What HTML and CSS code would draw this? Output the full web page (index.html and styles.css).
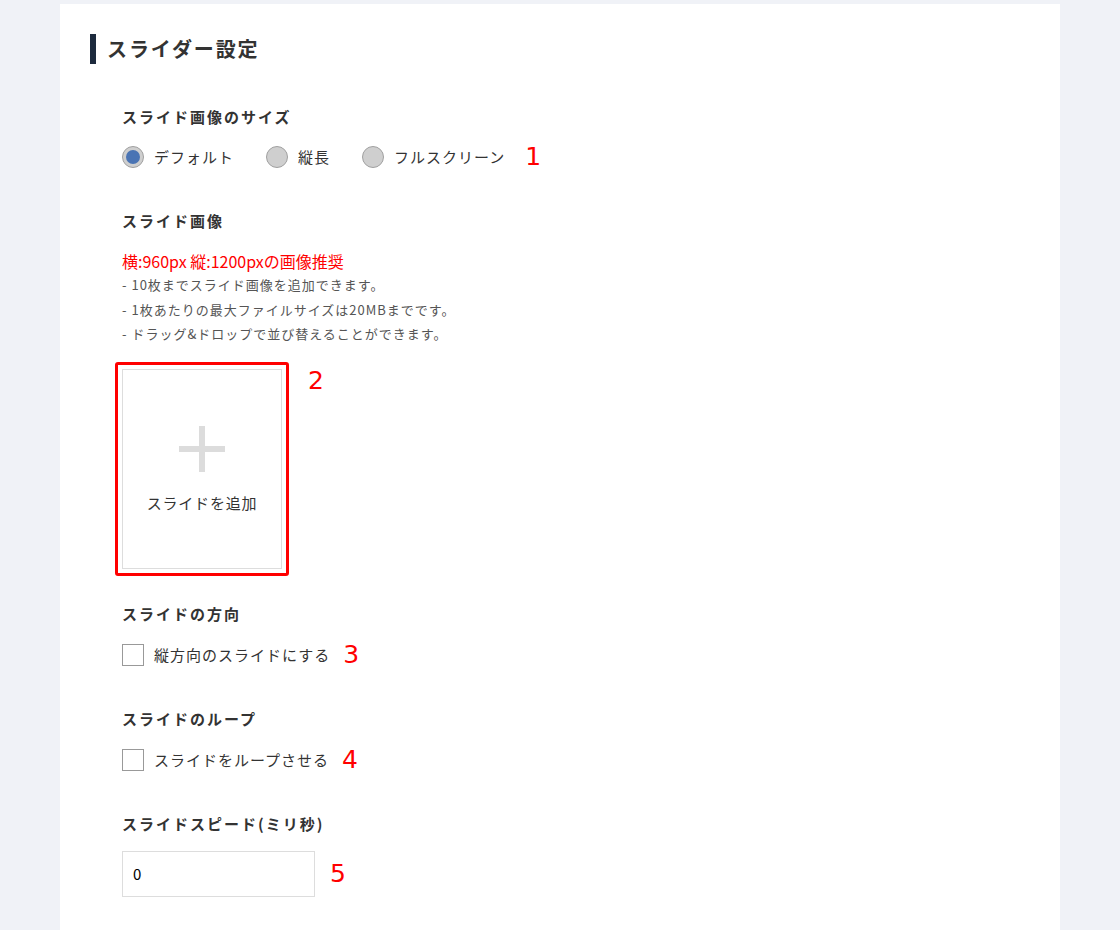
FILE: index.html
```html
<!DOCTYPE html>
<html lang="ja">
<head>
  <meta charset="UTF-8" />
  <meta name="viewport" content="width=device-width, initial-scale=1.0" />
  <title>スライダー設定</title>
  <link rel="stylesheet" href="styles.css">
</head>
<body>

  <div class="panel">
    <h2 class="section-title">スライダー設定</h2>

    <div class="field field-size">
      <div class="field-label">スライド画像のサイズ</div>
      <div class="radio-row">
        <label class="radio"><span class="radio-mark checked"></span>デフォルト</label>
        <label class="radio"><span class="radio-mark"></span>縦長</label>
        <label class="radio"><span class="radio-mark"></span>フルスクリーン</label>
        <span class="note-num">1</span>
      </div>
    </div>

    <div class="field field-images">
      <div class="field-label">スライド画像</div>
      <p class="recommend">横:960px 縦:1200pxの画像推奨</p>
      <ul class="notes">
        <li>- 10枚までスライド画像を追加できます。</li>
        <li>- 1枚あたりの最大ファイルサイズは20MBまでです。</li>
        <li>- ドラッグ&amp;ドロップで並び替えることができます。</li>
      </ul>
      <div class="upload-row">
        <div class="highlight">
          <div class="add-slide">
            <span class="plus"></span>
            <span class="add-text">スライドを追加</span>
          </div>
        </div>
        <span class="note-num num-top">2</span>
      </div>
    </div>

    <div class="field field-direction">
      <div class="field-label">スライドの方向</div>
      <div class="check-row">
        <label class="check"><span class="check-mark"></span>縦方向のスライドにする</label>
        <span class="note-num">3</span>
      </div>
    </div>

    <div class="field">
      <div class="field-label">スライドのループ</div>
      <div class="check-row">
        <label class="check"><span class="check-mark"></span>スライドをループさせる</label>
        <span class="note-num">4</span>
      </div>
    </div>

    <div class="field field-speed">
      <div class="field-label">スライドスピード(ミリ秒)</div>
      <div class="input-row">
        <input type="text" class="text-input" value="0" />
        <span class="note-num">5</span>
      </div>
    </div>
  </div>

</body>
</html>
```

FILE: styles.css
```css
body {
  margin: 0;
  background: #f0f2f7;
  color: #333;
  font-family: "Noto Sans CJK JP", "Noto Sans", sans-serif;
}
.panel {
  width: 1000px;
  margin: 4px 0 0 60px;
  background: #fff;
  padding: 30px 30px 40px;
  box-sizing: border-box;
  min-height: 926px;
}
.section-title {
  margin: 0;
  border-left: 6px solid #1d2a3d;
  padding-left: 11px;
  font-size: 20px;
  line-height: 30px;
  font-weight: 700;
  letter-spacing: 1.9px;
  color: #333;
}
.field {
  padding-left: 32px;
  margin-top: 42px;
}
.field-label {
  font-size: 15px;
  line-height: 22px;
  font-weight: 700;
  letter-spacing: 2px;
  color: #333;
}
.radio-row, .check-row, .input-row {
  display: flex;
  align-items: center;
  margin-top: 18px;
}
.check-row {
  margin-top: 19px;
}
.radio, .check {
  display: flex;
  align-items: center;
  font-size: 15px;
  line-height: 22px;
  letter-spacing: 1px;
  color: #333;
  margin-right: 32px;
}
.check {
  margin-right: 13px;
}
.radio-mark {
  width: 20px;
  height: 20px;
  border: 1px solid #a0a0a0;
  border-radius: 50%;
  background: #cfcfcf;
  margin-right: 10px;
  position: relative;
}
.radio-mark.checked::after {
  content: "";
  position: absolute;
  left: 3px;
  top: 3px;
  width: 14px;
  height: 14px;
  border-radius: 50%;
  background: #4a74b4;
}
.check-mark {
  width: 20px;
  height: 20px;
  border: 1px solid #999;
  background: #fff;
  margin-right: 10px;
}
.note-num {
  color: #f00;
  font-size: 25px;
  line-height: 22px;
  font-family: "DejaVu Sans", sans-serif;
}
.radio-row .note-num {
  margin-left: -12px;
}
.recommend {
  margin: 17px 0 0;
  color: #f00;
  font-size: 16px;
  line-height: 24px;
}
.notes {
  list-style: none;
  margin: 0;
  padding: 0;
  font-size: 13px;
  line-height: 24.5px;
  letter-spacing: 1px;
  color: #555;
}
.upload-row {
  display: flex;
  align-items: flex-start;
  margin-top: 15px;
  margin-left: -7px;
}
.highlight {
  border: 3px solid #f00;
  border-radius: 3px;
  padding: 4px;
}
.add-slide {
  width: 158px;
  height: 142px;
  border: 1px solid #ddd;
  display: flex;
  flex-direction: column;
  align-items: center;
  padding-top: 56px;
}
.plus {
  width: 46px;
  height: 46px;
  position: relative;
}
.plus::before, .plus::after {
  content: "";
  position: absolute;
  background: #dcdcdc;
}
.plus::before {
  left: 20px;
  top: 0;
  width: 6px;
  height: 46px;
}
.plus::after {
  left: 0;
  top: 20px;
  width: 46px;
  height: 6px;
}
.add-text {
  margin-top: 20px;
  font-size: 15px;
  line-height: 22px;
  letter-spacing: 0.8px;
  color: #333;
}
.num-top {
  margin-left: 19px;
  margin-top: 8px;
}
.field-direction {
  margin-top: 27px;
}
.input-row {
  margin-top: 16px;
}
.text-input {
  width: 193px;
  height: 46px;
  box-sizing: border-box;
  border: 1px solid #ddd;
  padding: 0 10px;
  font-size: 15px;
  font-family: "Noto Sans CJK JP", "Noto Sans", sans-serif;
  color: #000;
  margin-right: 15px;
  outline: none;
}
```
